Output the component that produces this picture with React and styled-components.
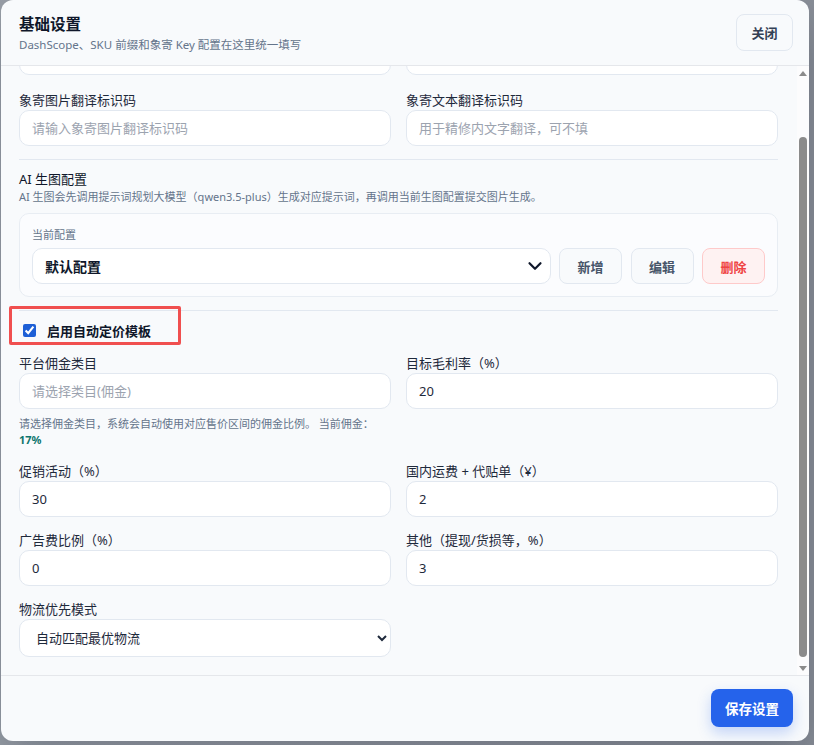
import React, { useEffect, useRef } from "react";
import styled, { createGlobalStyle } from "styled-components";
import { ChevronDown } from "lucide-react";

const Global = createGlobalStyle`
  html, body { margin: 0; padding: 0; height: 100%; overflow: hidden; }
  body {
    font-family: "Noto Sans", "Noto Sans CJK SC", sans-serif;
    background: #8d929a;
    color: #1e293b;
  }
  *, *::before, *::after { box-sizing: border-box; }
`;

const Backdrop = styled.div`
  width: 814px;
  height: 745px;
  padding: 0 5px 4px 1px;
  display: flex;
  background: linear-gradient(90deg, #9aa0a8 0%, #8a8f98 100%);
`;

const Modal = styled.div`
  width: 808px;
  height: 741px;
  background: #f8fafc;
  border-radius: 12px;
  display: flex;
  flex-direction: column;
  overflow: hidden;
  box-shadow: 0 20px 50px rgba(15, 23, 42, 0.25);
`;

const Header = styled.header`
  flex-shrink: 0;
  height: 66px;
  display: flex;
  align-items: flex-start;
  justify-content: space-between;
  padding: 13px 16px 0 18px;
  border-bottom: 1px solid #e5e7eb;
`;

const TitleBlock = styled.div`
  display: flex;
  flex-direction: column;
`;

const Title = styled.h2`
  margin: 0;
  font-size: 15.5px;
  line-height: 22px;
  font-weight: 700;
  color: #0f172a;
`;

const Subtitle = styled.p`
  margin: 2px 0 0;
  font-size: 11.5px;
  line-height: 16px;
  color: #64748b;
`;

const GhostButton = styled.button`
  margin-top: 1px;
  width: 57px;
  height: 37px;
  border-radius: 8px;
  border: 1px solid #e2e8f0;
  background: #f8fafc;
  color: #334155;
  font-family: inherit;
  font-size: 13px;
  font-weight: 600;
`;

const Body = styled.div`
  flex: 1;
  min-height: 0;
  display: flex;
`;

const ScrollArea = styled.div`
  flex: 1;
  overflow-y: auto;
  scrollbar-width: none;
  padding: 16px 19px 18px 18px;
  &::-webkit-scrollbar { display: none; }
`;

const Scrollbar = styled.div`
  width: 12px;
  flex-shrink: 0;
  display: flex;
  flex-direction: column;
  align-items: center;
  background: #fcfcfd;
`;

const ArrowBox = styled.div`
  height: 14px;
  width: 12px;
  display: flex;
  align-items: center;
  justify-content: center;
`;

const Track = styled.div`
  flex: 1;
  width: 100%;
  display: flex;
  flex-direction: column;
  justify-content: flex-end;
  align-items: center;
  padding-bottom: 4px;
`;

const Thumb = styled.div`
  width: 8px;
  border-radius: 4px;
  background: #8b8b8b;
`;

const Grid = styled.div`
  display: grid;
  grid-template-columns: 1fr 1fr;
  column-gap: 15px;
  row-gap: ${(p) => p.$rowGap}px;
  margin-top: ${(p) => p.$top || 0}px;
`;

const Field = styled.div`
  display: flex;
  flex-direction: column;
  min-width: 0;
`;

const Label = styled.label`
  font-size: 13px;
  line-height: 20px;
  color: #1e293b;
`;

const Input = styled.input`
  height: 36px;
  width: 100%;
  border: 1px solid #e2e8f0;
  border-radius: 10px;
  background: #fff;
  padding: 0 12px;
  font-family: inherit;
  font-size: 13px;
  color: #1e293b;
  outline: none;
  &::placeholder { color: #9ca3af; }
`;

const NativeSelect = styled.select`
  height: 38px;
  width: 100%;
  border: 1px solid #e2e8f0;
  border-radius: 10px;
  background: #fff;
  padding: 0 10px 0 12px;
  font-family: inherit;
  font-size: 13px;
  color: #1e293b;
  outline: none;
`;

const Help = styled.p`
  margin: 7px 0 0;
  font-size: 11px;
  line-height: 16px;
  color: #64748b;
`;

const Strong = styled.strong`
  color: #0f766e;
  font-weight: 700;
`;

const Divider = styled.hr`
  margin: ${(p) => p.$top}px 0 ${(p) => p.$bottom}px;
  border: 0;
  border-top: 1px solid #e2e8f0;
`;

const SectionTitle = styled.div`
  font-size: 13px;
  line-height: 20px;
  color: #0f172a;
`;

const SectionDesc = styled.div`
  font-size: 11px;
  line-height: 16px;
  color: #64748b;
`;

const Card = styled.div`
  margin-top: 8px;
  border: 1px solid #e8edf3;
  border-radius: 10px;
  background: #fbfcfe;
  padding: 11px 12px 12px;
`;

const CardLabel = styled.div`
  font-size: 11px;
  line-height: 20px;
  color: #64748b;
  margin-bottom: 3px;
`;

const ConfigRow = styled.div`
  display: flex;
  align-items: center;
  gap: 8.5px;
`;

const SelectWrap = styled.div`
  position: relative;
  flex: 1;
  display: flex;
`;

const PlainSelect = styled.select`
  appearance: none;
  -webkit-appearance: none;
  width: 100%;
  height: 36px;
  border: 1px solid #e2e8f0;
  border-radius: 10px;
  background: #fff;
  padding: 0 36px 0 12px;
  font-family: inherit;
  font-size: 14px;
  font-weight: 700;
  color: #0f172a;
  outline: none;
`;

const Chevron = styled(ChevronDown)`
  position: absolute;
  right: 5px;
  top: 50%;
  transform: translateY(-50%);
  color: #0f172a;
  pointer-events: none;
`;

const ActionButton = styled.button`
  width: 63px;
  height: 36px;
  flex-shrink: 0;
  border-radius: 8px;
  border: 1px solid ${(p) => (p.$danger ? "#fecaca" : "#e2e8f0")};
  background: ${(p) => (p.$danger ? "#fef2f2" : "#f8fafc")};
  color: ${(p) => (p.$danger ? "#ef4444" : "#475569")};
  font-family: inherit;
  font-size: 13px;
  font-weight: 700;
`;

const CheckRow = styled.label`
  position: relative;
  align-self: flex-start;
  display: flex;
  align-items: center;
  gap: 11px;
  height: 20px;
  padding-left: 4px;
  font-size: 13px;
  font-weight: 700;
  color: #0f172a;
  &::after {
    content: "";
    position: absolute;
    left: -10px;
    top: -14px;
    width: 172px;
    height: 39px;
    border: 3px solid #f04f4f;
    border-radius: 2px;
    pointer-events: none;
  }
`;

const Check = styled.input`
  margin: 0;
  width: 13px;
  height: 13px;
  accent-color: #1d5fd6;
`;

const Content = styled.div`
  display: flex;
  flex-direction: column;
`;

const Footer = styled.footer`
  flex-shrink: 0;
  display: flex;
  justify-content: flex-end;
  padding: 13px 16px 14px;
  border-top: 1px solid #e5e7eb;
`;

const PrimaryButton = styled.button`
  width: 82px;
  height: 38px;
  border: 0;
  border-radius: 8px;
  background: #2563eb;
  color: #fff;
  font-family: inherit;
  font-size: 13.5px;
  font-weight: 700;
  box-shadow: 0 6px 14px rgba(37, 99, 235, 0.25);
`;

function Arrow({ down }) {
  return (
    <svg width="8" height="5" viewBox="0 0 8 5">
      <path d={down ? "M0 0 H8 L4 5 Z" : "M0 5 H8 L4 0 Z"} fill="#8b8b8b" />
    </svg>
  );
}

export default function App() {
  const scrollRef = useRef(null);
  useEffect(() => {
    if (scrollRef.current) scrollRef.current.scrollTop = scrollRef.current.scrollHeight;
  }, []);

  return (
    <>
      <Global />
      <Backdrop>
        <Modal>
          <Header>
            <TitleBlock>
              <Title>基础设置</Title>
              <Subtitle>DashScope、SKU 前缀和象寄 Key 配置在这里统一填写</Subtitle>
            </TitleBlock>
            <GhostButton>关闭</GhostButton>
          </Header>

          <Body>
            <ScrollArea ref={scrollRef}>
              <Content>
                <Grid $rowGap={15}>
                  <Field>
                    <Label>DashScope API Key</Label>
                    <Input placeholder="请输入 DashScope API Key" />
                  </Field>
                  <Field>
                    <Label>SKU 前缀</Label>
                    <Input placeholder="请输入 SKU 前缀" />
                  </Field>
                  <Field>
                    <Label>象寄图片翻译标识码</Label>
                    <Input placeholder="请输入象寄图片翻译标识码" />
                  </Field>
                  <Field>
                    <Label>象寄文本翻译标识码</Label>
                    <Input placeholder="用于精修内文字翻译，可不填" />
                  </Field>
                </Grid>

                <Divider $top={13} $bottom={9} />
                <SectionTitle>AI 生图配置</SectionTitle>
                <SectionDesc>
                  AI 生图会先调用提示词规划大模型（qwen3.5-plus）生成对应提示词，再调用当前生图配置提交图片生成。
                </SectionDesc>
                <Card>
                  <CardLabel>当前配置</CardLabel>
                  <ConfigRow>
                    <SelectWrap>
                      <PlainSelect defaultValue="default">
                        <option value="default">默认配置</option>
                      </PlainSelect>
                      <Chevron size={22} strokeWidth={2.4} />
                    </SelectWrap>
                    <ActionButton>新增</ActionButton>
                    <ActionButton>编辑</ActionButton>
                    <ActionButton $danger>删除</ActionButton>
                  </ConfigRow>
                </Card>

                <Divider $top={13} $bottom={9} />
                <CheckRow>
                  <Check type="checkbox" defaultChecked />
                  启用自动定价模板
                </CheckRow>

                <Grid $rowGap={13} $top={13}>
                  <Field>
                    <Label>平台佣金类目</Label>
                    <Input placeholder="请选择类目(佣金)" />
                    <Help>
                      请选择佣金类目，系统会自动使用对应售价区间的佣金比例。 当前佣金：<Strong>17%</Strong>
                    </Help>
                  </Field>
                  <Field>
                    <Label>目标毛利率（%）</Label>
                    <Input defaultValue="20" />
                  </Field>
                  <Field>
                    <Label>促销活动（%）</Label>
                    <Input defaultValue="30" />
                  </Field>
                  <Field>
                    <Label>国内运费 + 代贴单（¥）</Label>
                    <Input defaultValue="2" />
                  </Field>
                  <Field>
                    <Label>广告费比例（%）</Label>
                    <Input defaultValue="0" />
                  </Field>
                  <Field>
                    <Label>其他（提现/货损等，%）</Label>
                    <Input defaultValue="3" />
                  </Field>
                  <Field>
                    <Label>物流优先模式</Label>
                    <NativeSelect defaultValue="auto">
                      <option value="auto">自动匹配最优物流</option>
                    </NativeSelect>
                  </Field>
                </Grid>
              </Content>
            </ScrollArea>
            <Scrollbar>
              <ArrowBox><Arrow /></ArrowBox>
              <Track>
                <Thumb style={{ height: 520 }} />
              </Track>
              <ArrowBox><Arrow down /></ArrowBox>
            </Scrollbar>
          </Body>

          <Footer>
            <PrimaryButton>保存设置</PrimaryButton>
          </Footer>
        </Modal>
      </Backdrop>
    </>
  );
}
